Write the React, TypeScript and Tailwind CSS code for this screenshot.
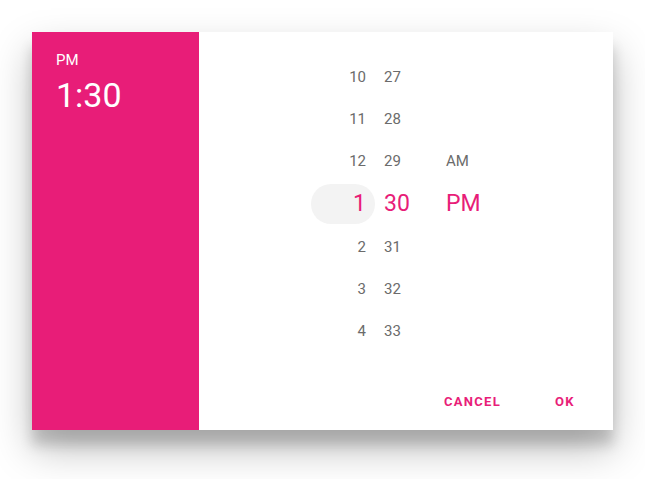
import React from 'react';

const hours = ['10', '11', '12', '1', '2', '3', '4'];
const minutes = ['27', '28', '29', '30', '31', '32', '33'];
const periods = ['', '', 'AM', 'PM', '', '', ''];
const SELECTED = 3;

const rowClass = (i: number) =>
  i === SELECTED
    ? 'h-[44px] flex items-center text-[23px] text-[#e81d78]'
    : 'h-[42px] flex items-center text-[15px] text-[#6b6b6b]';

const App: React.FC = () => {
  return (
    <div className="w-[645px] h-[479px] bg-white pt-8 pl-8" style={{ fontFamily: 'Roboto, "Noto Sans", sans-serif' }}>
      <div className="flex w-[581px] h-[398px] bg-white shadow-[0_19px_38px_rgba(0,0,0,0.26),0_15px_12px_rgba(0,0,0,0.16)]">
        <div className="w-[167px] shrink-0 bg-[#e81d78] text-white px-6 pt-[19px]">
          <div className="text-[15px] leading-[18px]">PM</div>
          <div className="text-[34px] leading-[40px] mt-[6px]">1:30</div>
        </div>

        <div className="flex-1 flex flex-col">
          <div className="flex pt-[24px] pl-[112px]">
            <div className="w-16 flex flex-col">
              {hours.map((h, i) => (
                <div key={h} className={i === SELECTED ? 'h-[44px] flex items-center' : 'h-[42px] flex items-center'}>
                  <div
                    className={
                      i === SELECTED
                        ? 'w-full h-10 rounded-full bg-[#f3f3f3] flex items-center justify-end pr-[9px] text-[23px] text-[#e81d78]'
                        : 'w-full h-10 flex items-center justify-end pr-[9px] text-[15px] text-[#6b6b6b]'
                    }
                  >
                    {h}
                  </div>
                </div>
              ))}
            </div>
            <div className="w-[71px] pl-[9px] flex flex-col">
              {minutes.map((m, i) => (
                <div key={m} className={rowClass(i)}>
                  {m}
                </div>
              ))}
            </div>
            <div className="flex flex-col">
              {periods.map((p, i) => (
                <div key={i} className={rowClass(i)}>
                  {p}
                </div>
              ))}
            </div>
          </div>

          <div className="flex justify-end gap-4 pr-4 mt-[32px]">
            <button className="h-9 px-4 min-w-16 text-[13px] font-bold tracking-[0.1em] text-[#e81d78]">CANCEL</button>
            <button className="h-9 px-4 min-w-16 text-[13px] font-bold tracking-[0.1em] text-[#e81d78]">OK</button>
          </div>
        </div>
      </div>
    </div>
  );
};

export default App;
